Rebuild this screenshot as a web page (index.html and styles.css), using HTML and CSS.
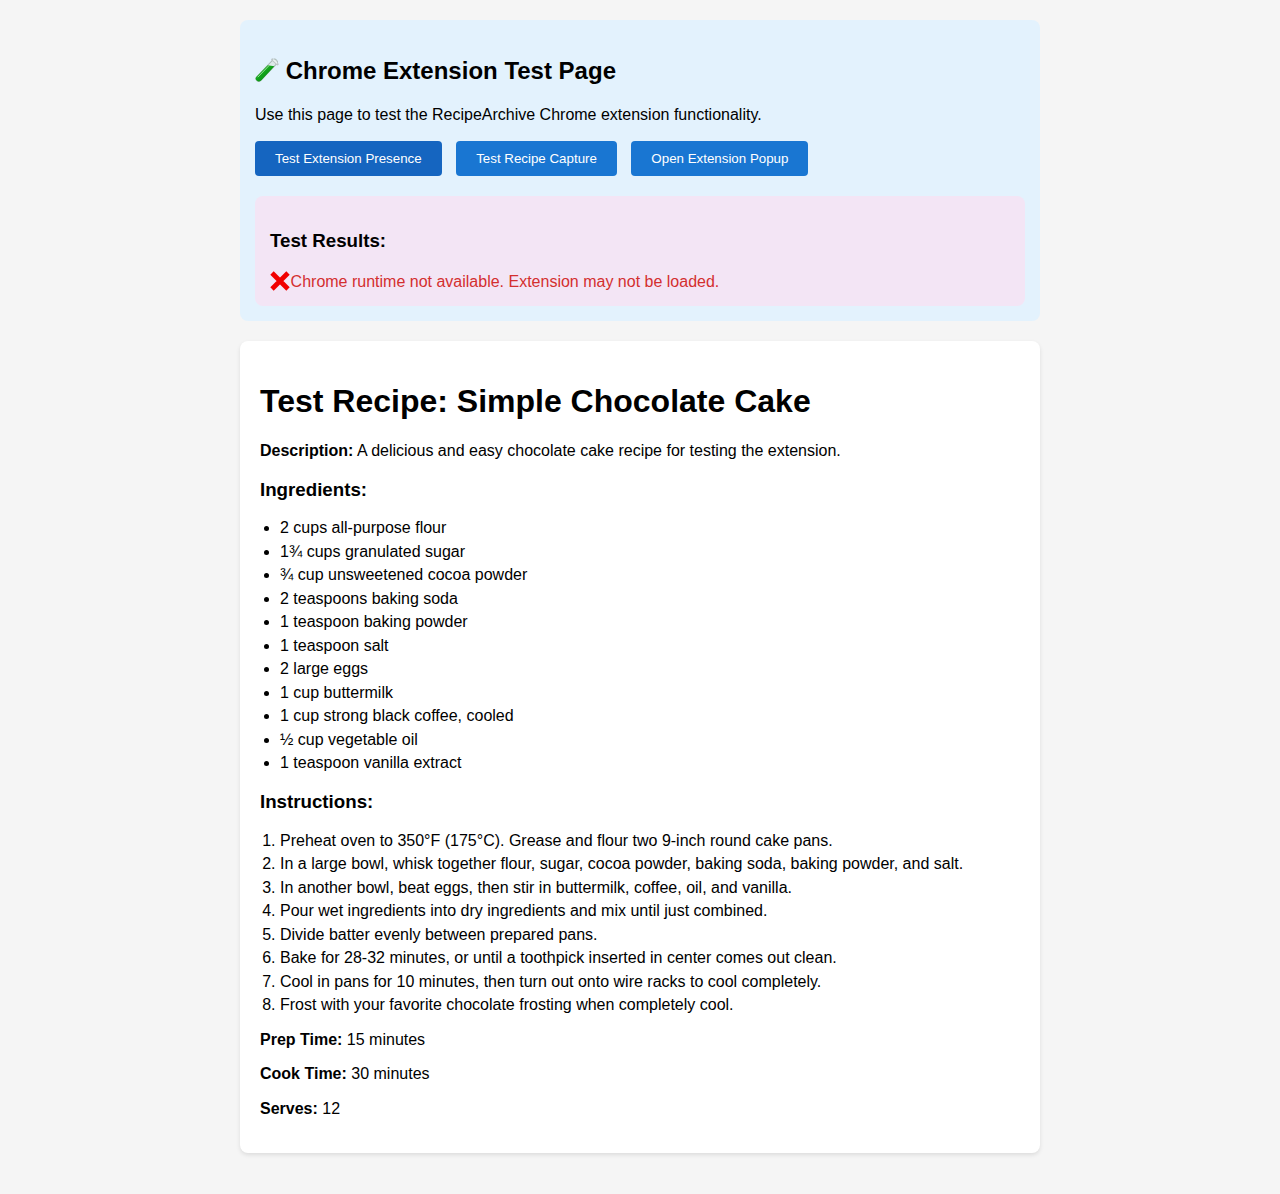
FILE: index.html
```html
<!DOCTYPE html>
<html lang="en">
<head>
<meta charset="UTF-8">
<title>Chrome Extension Test Page</title>
<link rel="stylesheet" href="styles.css">
</head>
<body>
<div class="test-section">
<h2><svg class="tube" viewBox="0 0 24 26" aria-hidden="true">
<defs><linearGradient id="liquid" x1="0" y1="0" x2="1" y2="1"><stop offset="0" stop-color="#6fce6a"/><stop offset=".45" stop-color="#12a51c"/><stop offset="1" stop-color="#04700d"/></linearGradient></defs>
<path d="M3.8 21.6 19.6 5" stroke="#a9b8b4" stroke-width="6.4" stroke-linecap="round"/>
<path d="M4 21 19.6 5" stroke="#dce9e9" stroke-width="4.6" stroke-linecap="round"/>
<path d="M1.4 19.8 12.6 8.2 19.4 9.2 6.2 23.4Q3.8 25.4 1.7 23.5T1.4 19.8Z" fill="url(#liquid)"/>
<path d="M2.8 20.2 14 8.6" stroke="#a2dda0" stroke-width="0.9"/>
<path d="M17.4 2.6 22.4 7.2" stroke="#bcc6c7" stroke-width="2.4" stroke-linecap="round"/>
<path d="M18.6 3 21.8 6" stroke="#eef4f5" stroke-width="1.2" stroke-linecap="round"/>
</svg> Chrome Extension Test Page</h2>
<p>Use this page to test the RecipeArchive Chrome extension functionality.</p>
<button class="active">Test Extension Presence</button>
<button>Test Recipe Capture</button>
<button>Open Extension Popup</button>
<div class="results">
<h3>Test Results:</h3>
<div class="error"><svg class="cross" viewBox="0 0 20 20" aria-hidden="true"><path d="M2 2 18 18M18 2 2 18" stroke="#f10000" stroke-width="4.8"/></svg>Chrome runtime not available. Extension may not be loaded.</div>
</div>
</div>
<div class="recipe">
<h1>Test Recipe: Simple Chocolate Cake</h1>
<p><strong>Description:</strong> A delicious and easy chocolate cake recipe for testing the extension.</p>
<h3>Ingredients:</h3>
<ul>
<li>2 cups all-purpose flour</li>
<li>1¾ cups granulated sugar</li>
<li>¾ cup unsweetened cocoa powder</li>
<li>2 teaspoons baking soda</li>
<li>1 teaspoon baking powder</li>
<li>1 teaspoon salt</li>
<li>2 large eggs</li>
<li>1 cup buttermilk</li>
<li>1 cup strong black coffee, cooled</li>
<li>½ cup vegetable oil</li>
<li>1 teaspoon vanilla extract</li>
</ul>
<h3>Instructions:</h3>
<ol>
<li>Preheat oven to 350°F (175°C). Grease and flour two 9-inch round cake pans.</li>
<li>In a large bowl, whisk together flour, sugar, cocoa powder, baking soda, baking powder, and salt.</li>
<li>In another bowl, beat eggs, then stir in buttermilk, coffee, oil, and vanilla.</li>
<li>Pour wet ingredients into dry ingredients and mix until just combined.</li>
<li>Divide batter evenly between prepared pans.</li>
<li>Bake for 28-32 minutes, or until a toothpick inserted in center comes out clean.</li>
<li>Cool in pans for 10 minutes, then turn out onto wire racks to cool completely.</li>
<li>Frost with your favorite chocolate frosting when completely cool.</li>
</ol>
<p><strong>Prep Time:</strong> 15 minutes</p>
<p><strong>Cook Time:</strong> 30 minutes</p>
<p><strong>Serves:</strong> 12</p>
</div>
</body>
</html>
```
FILE: styles.css
```css
body {
  font-family: "Liberation Sans", Arial, sans-serif;
  line-height: 18.5px;
  max-width: 800px;
  margin: 0 auto;
  padding: 20px;
  background: #f5f5f5;
}
h1 {
  line-height: 35.7px;
  margin-bottom: 22.2px;
}
h2 { line-height: 31.6px; }
h3 { line-height: 21.5px; }
.test-section {
  background: #e3f2fd;
  padding: 15px;
  border-radius: 8px;
  margin-bottom: 20px;
}
.tube {
  width: 24px;
  height: 26px;
  vertical-align: 0;
  margin: -8px 0 -4px;
  fill: none;
}
.cross {
  width: 20px;
  height: 20px;
  vertical-align: 0;
  margin: -8px 0.6px -4px 0;
  fill: none;
}
button {
  background: #1976d2;
  color: white;
  border: none;
  padding: 10px 20px;
  border-radius: 4px;
  margin-right: 10px;
  font-family: inherit;
  line-height: 15.5px;
}
.active { background: #1565c0; }
.results {
  background: #f3e5f5;
  padding: 15px;
  border-radius: 8px;
  margin-top: 20px;
}
.error {
  color: #d32f2f;
  line-height: 19px;
  padding-top: 2px;
}
.recipe {
  background: white;
  padding: 20.9px 20px 18.8px;
  border-radius: 8px;
  margin-bottom: 20px;
  box-shadow: 0 2px 4px rgba(0, 0, 0, 0.1);
}
ul, ol { padding-left: 20px; }
ol { margin-top: 19.1px; }
li { margin-bottom: 5px; }
```
